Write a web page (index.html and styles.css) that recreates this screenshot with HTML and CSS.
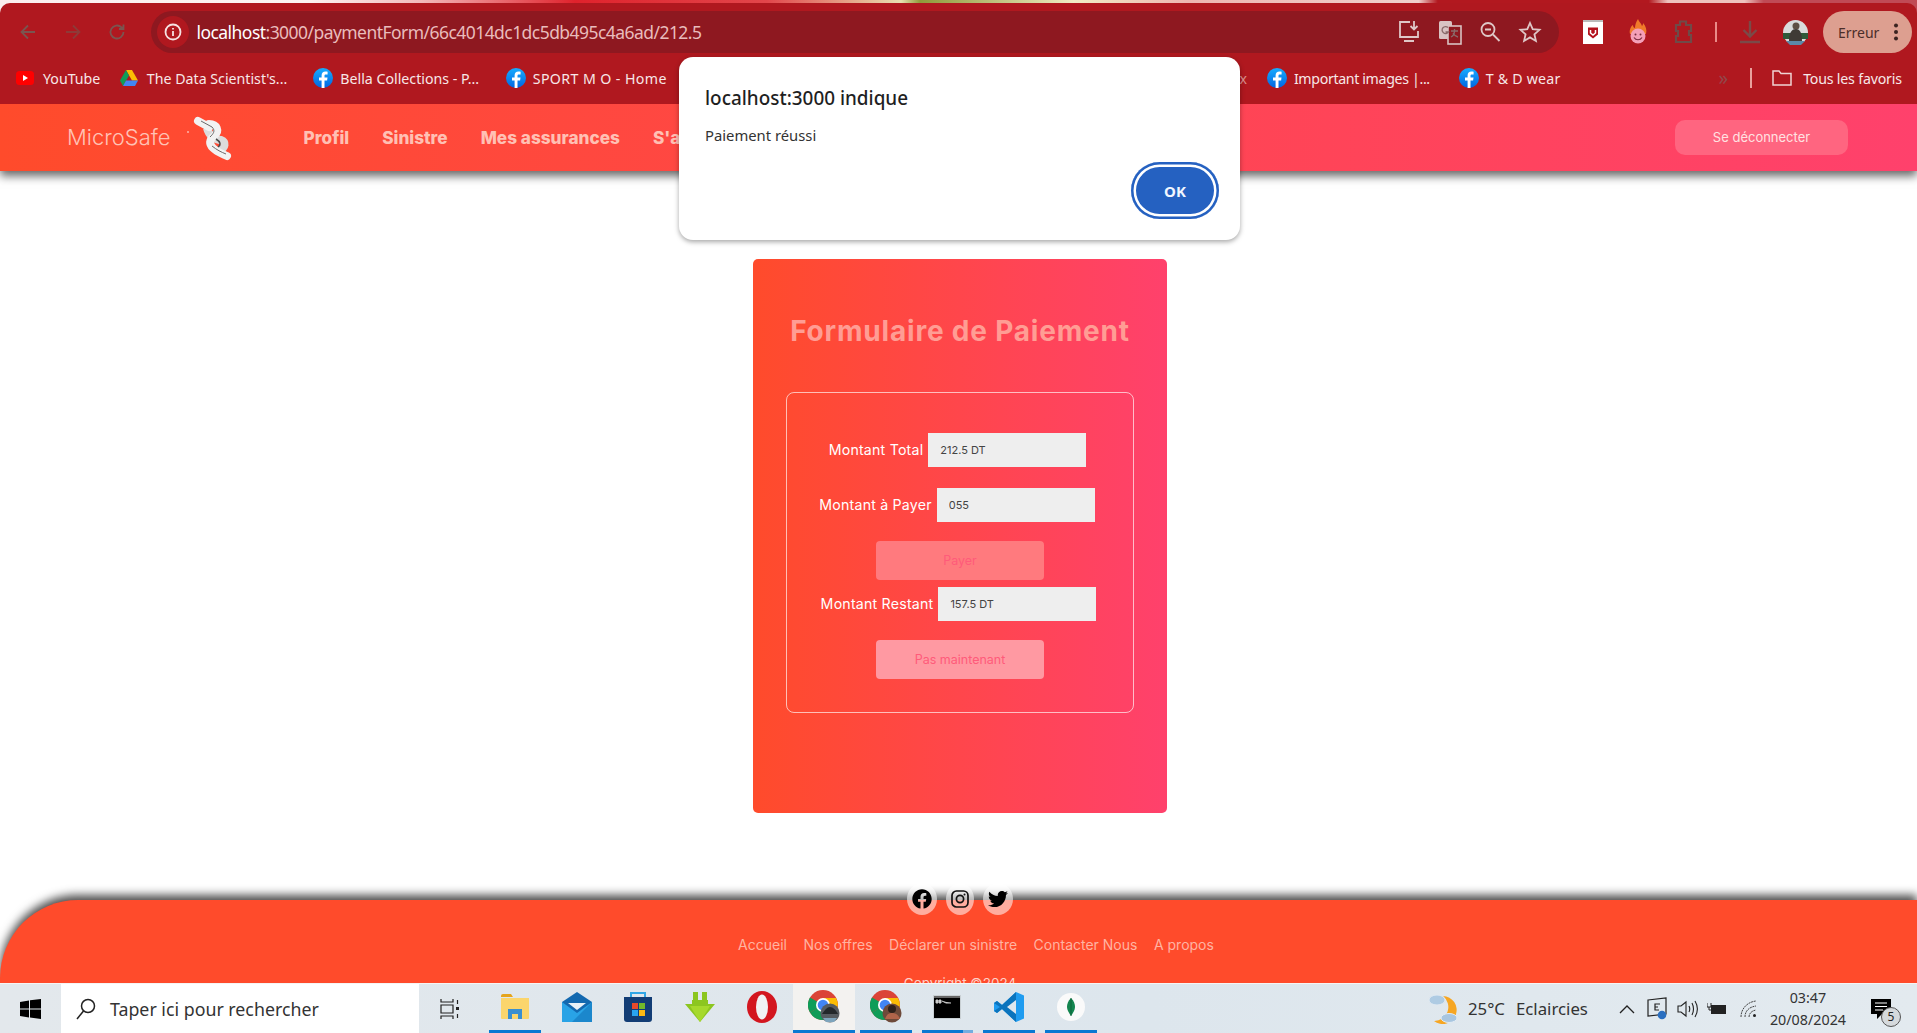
FILE: index.html
```html
<!DOCTYPE html>
<html lang="fr">
<head>
    <meta charset="UTF-8">
    <title>MicroSafe - Paiement</title>
    <link rel="stylesheet" href="styles.css">
</head>
<body>
<div class="screen">

    <!-- browser frame -->
    <header class="chrome">
        <div class="toolbar">
            <div class="nav-btn"><svg width="20" height="20" viewBox="0 0 20 20"><path d="M17 10H4M10 3.500 3.500 10l6.500 6.500" class="ic-dim"/></svg></div>
            <div class="nav-btn"><svg width="20" height="20" viewBox="0 0 20 20"><path d="M3 10h13M10 3.500l6.500 6.500-6.500 6.500" class="ic-dimmer"/></svg></div>
            <div class="nav-btn"><svg width="20" height="20" viewBox="0 0 20 20"><path d="M16.500 10a6.500 6.500 0 1 1-2-4.700L16.500 7M16.500 2.500V7H12" class="ic-dim"/></svg></div>
            <div class="address-bar">
                <span class="site-info"><svg width="20" height="20" viewBox="0 0 20 20"><circle cx="10" cy="10" r="7.500" class="ic-light"/><path d="M10 9v5M10 6v1.600" class="ic-light"/></svg></span>
                <span class="url"><b>localhost</b>:3000/paymentForm/66c4014dc1dc5db495c4a6ad/212.5</span>
                <span class="bar-icon"><svg width="28" height="26" viewBox="0 0 28 26"><path d="M14 3H4v15h18v-6M8 22h10M18 2v8M14.500 7l3.500 3.500L21.500 7" class="ic-pale"/></svg></span>
                <span class="bar-icon"><svg width="26" height="28" viewBox="0 0 26 28"><rect x="2" y="3" width="13" height="18" rx="1.500" fill="#d9c2c2"/><rect x="11" y="8" width="13" height="18" fill="#8e1820" stroke="#d9c2c2" stroke-width="1.600"/><path d="M11 9.500a3.500 3.500 0 1 0 .5 4.500h-3M14 13h7M17.500 11v2c0 3-1.500 5-3.500 6M16 15c1 2 3 3.500 5 4" fill="none" stroke="#8a6a6a" stroke-width="1.300"/></svg></span>
                <span class="bar-icon"><svg width="24" height="24" viewBox="0 0 24 24"><circle cx="10" cy="9.500" r="6.500" class="ic-pale"/><path d="M15 14.500 21.500 21M7 9.500h6" class="ic-pale"/></svg></span>
                <span class="bar-icon"><svg width="24" height="24" viewBox="0 0 24 24"><path d="m12 3 2.700 6.200 6.800.6-5.100 4.500 1.500 6.600L12 17.400l-5.900 3.500 1.500-6.600L2.500 9.800l6.800-.6z" class="ic-pale"/></svg></span>
            </div>
            <div class="ext"><svg width="20" height="24" viewBox="0 0 20 24"><rect width="20" height="24" fill="#fff"/><rect width="20" height="2" fill="#bbb"/><path d="M5 7.500h10v7l-5 4-5-4z" fill="#b3121d"/><path d="M7.500 10v3l2.500 2 2.500-2v-3" fill="none" stroke="#fff" stroke-width="1.500"/></svg></div>
            <div class="ext"><svg width="18" height="26" viewBox="0 0 18 26"><path d="M9 0c1 3 3 4 4 7 1-1 1-2 1-3 3 3 4 7 3 11H1C0 11 2 7 4 6c0 2 1 3 2 3 0-3 1-6 3-9z" fill="#f07a2a"/><circle cx="9" cy="17" r="7.500" fill="#f4a0b8"/><circle cx="6.500" cy="15.500" r="1" fill="#7a2c40"/><circle cx="11.500" cy="15.500" r="1" fill="#7a2c40"/><path d="M5 18.500c2 3 6 3 8 0" fill="none" stroke="#7a2c40" stroke-width="1.200"/></svg></div>
            <div class="ext"><svg width="22" height="26" viewBox="0 0 22 26"><path d="M4 6h4V2.500h6V6h5v6h-2v4h2v7H4v-6h2v-5H4z" fill="none" stroke="#6f4a48" stroke-width="2.200"/></svg></div>
            <span class="tool-sep"></span>
            <div class="download"><svg width="24" height="26" viewBox="0 0 24 26"><path d="M12 2v15M5.500 11l6.500 6.500 6.500-6.500M2 23h20" fill="none" stroke="#7a4a48" stroke-width="2.400"/></svg></div>
            <div class="avatar"><svg width="25" height="25" viewBox="0 0 25 25"><circle cx="12.500" cy="12.500" r="12.500" fill="#d9dcdc"/><path d="M0 13h25v6H0z" fill="#2f5a3a"/><path d="M3 21h19l-4 4H7z" fill="#5b89a8"/><circle cx="13" cy="6" r="3.500" fill="#5d5044"/><path d="M6 21c0-9 3-12 7-12s6 4 6 12z" fill="#3f3a36"/></svg></div>
            <div class="error-pill"><span>Erreur</span><i class="dots"></i></div>
        </div>

        <nav class="bookmarks">
            <a class="bm bm-yt"><svg width="18" height="14" viewBox="0 0 18 14"><rect width="18" height="14" rx="3.500" fill="#f00"/><path d="m7 4 5 3-5 3z" fill="#fff"/></svg>YouTube</a>
            <a class="bm bm-drive"><svg width="18" height="17" viewBox="0 0 18 17"><path d="M6 0h6l6 10.500h-6z" fill="#fbbc04"/><path d="M6 0 0 10.500 3 16l6-10.500z" fill="#0f9d58"/><path d="M3 16h12l3-5.500H6z" fill="#4285f4"/></svg>The Data Scientist's...</a>
            <a class="bm bm-fb1"><svg class="fb" viewBox="0 0 20 20"><use href="#fb-badge"/></svg>Bella Collections - P...</a>
            <a class="bm bm-fb2"><svg class="fb" viewBox="0 0 20 20"><use href="#fb-badge"/></svg>SPORT M O - Home</a>
            <a class="bm bm-hidden">x</a>
            <a class="bm bm-fb3"><svg class="fb" viewBox="0 0 20 20"><use href="#fb-badge"/></svg>Important images |...</a>
            <a class="bm bm-fb4"><svg class="fb" viewBox="0 0 20 20"><use href="#fb-badge"/></svg>T &amp; D wear</a>
            <span class="bm-more">&raquo;</span>
            <span class="bm-sep"></span>
            <a class="bm bm-all"><svg width="20" height="18" viewBox="0 0 20 18"><path d="M1 2h6l2 2.500h10V16H1z" fill="none" stroke="#efd3d3" stroke-width="1.500"/></svg>Tous les favoris</a>
        </nav>
    </header>

    <!-- the page itself -->
    <main class="page">
        <div class="site-nav">
            <span class="brand">MicroSafe</span>
            <svg class="knot" width="60" height="55" viewBox="0 0 60 55">
                <circle cx="7" cy="22" r=".8" fill="#fff"/>
                <path d="M26 18C28 26 34 30 40 30 45 32 45 38 38 40" fill="none" stroke="#dcdcdc" stroke-width="8"/>
                <path d="M17 11 28 17M28 14C36 14 39 21 33 26 28 30 28 34 32 38 36 42 42 44 46 46" fill="none" stroke="#f2f2f2" stroke-width="8" stroke-linecap="round"/>
                <path d="M20 11 31 17C35 21 32 24 29 27M31 36C36 40 40 42 45 44" fill="none" stroke="#6a6a6a" stroke-width="1"/>
                <path d="M35 29C40 32 40 35 37 37" fill="none" stroke="#4a4a4a" stroke-width="1.500"/>
            </svg>
            <ul class="site-links">
                <li>Profil</li>
                <li>Sinistre</li>
                <li>Mes assurances</li>
                <li>S'as</li>
            </ul>
            <button class="logout">Se déconnecter</button>
        </div>

        <section class="form-wrap">
            <div class="pay-card">
                <h1>Formulaire de Paiement</h1>
                <form class="pay-form">
                    <div class="row row-first">
                        <label>Montant Total</label>
                        <input type="text" value="212.5 DT" readonly>
                    </div>
                    <div class="row row-second">
                        <label>Montant à Payer</label>
                        <input type="text" value="055" readonly>
                    </div>
                    <button type="button" class="btn btn-pay">Payer</button>
                    <div class="row row-third">
                        <label>Montant Restant</label>
                        <input type="text" value="157.5 DT" readonly>
                    </div>
                    <button type="button" class="btn btn-later">Pas maintenant</button>
                </form>
            </div>
        </section>

        <footer class="site-footer">
            <div class="socials">
                <span class="social"><svg width="20" height="20" viewBox="0 0 512 512"><path d="M504 256C504 119 393 8 256 8S8 119 8 256c0 123.780 90.690 226.380 209.250 245V327.690h-63V256h63v-54.640c0-62.150 37-96.480 93.670-96.480 27.140 0 55.520 4.840 55.520 4.840v61h-31.280c-30.800 0-40.410 19.120-40.410 38.730V256h68.780l-11 71.690h-57.780V501C413.310 482.380 504 379.780 504 256z"/></svg></span>
                <span class="social social-ig"><svg width="18" height="18" viewBox="0 0 18 18"><rect x="1" y="1" width="16" height="16" rx="4.500" fill="none" stroke="#111" stroke-width="1.700"/><circle cx="9" cy="9" r="3.600" fill="none" stroke="#111" stroke-width="1.700"/><circle cx="13.500" cy="4.500" r="1" fill="#111"/></svg></span>
                <span class="social"><svg width="20" height="20" viewBox="0 0 512 512"><path d="M459.370 151.716c.325 4.548.325 9.097.325 13.645 0 138.720-105.583 298.558-298.558 298.558-59.452 0-114.680-17.219-161.137-47.106 8.447.974 16.568 1.299 25.340 1.299 49.055 0 94.213-16.568 130.274-44.832-46.132-.975-84.792-31.188-98.112-72.772 6.498.974 12.995 1.624 19.818 1.624 9.421 0 18.843-1.300 27.614-3.573-48.081-9.747-84.143-51.980-84.143-102.985v-1.299c13.969 7.797 30.214 12.670 47.431 13.319-28.264-18.843-46.781-51.005-46.781-87.391 0-19.492 5.197-37.360 14.294-52.954 51.655 63.675 129.300 105.258 216.365 109.807-1.624-7.797-2.599-15.918-2.599-24.040 0-57.828 46.782-104.934 104.934-104.934 30.213 0 57.502 12.670 76.670 33.137 23.715-4.548 46.456-13.320 66.599-25.340-7.798 24.366-24.366 44.833-46.132 57.827 21.117-2.273 41.584-8.122 60.426-16.243-14.292 20.791-32.161 39.308-52.628 54.253z"/></svg></span>
            </div>
            <ul class="footer-links">
                <li>Accueil</li>
                <li>Nos offres</li>
                <li>Déclarer un sinistre</li>
                <li>Contacter Nous</li>
                <li>A propos</li>
            </ul>
            <p class="copyright">Copyright ©2024</p>
        </footer>
    </main>

    <!-- windows taskbar -->
    <div class="taskbar">
        <div class="start"><svg width="21" height="20" viewBox="0 0 21 20"><path d="M0 3l9-1.500V9.400H0zM10 1.300 21 0v9.400H10zM0 10.500h9v8L0 17zM10 10.500h11V20l-11-1.600z" fill="#000"/></svg></div>
        <div class="search">
            <svg width="22" height="24" viewBox="0 0 22 24"><circle cx="13" cy="9" r="6.500" fill="none" stroke="#222" stroke-width="1.500"/><path d="M8.500 14 2 22" stroke="#222" stroke-width="1.500"/></svg>
            <span>Taper ici pour rechercher</span>
        </div>
        <div class="task-view"><svg width="20" height="22" viewBox="0 0 20 22"><path d="M1 1v3h12V1M1 21v-3h12v3M1 7h12v8H1zM17.500 2v4M17.500 16v4" fill="none" stroke="#222" stroke-width="1.200"/><rect x="16" y="9" width="3" height="3" fill="#222"/></svg></div>

        <div class="app running"><svg width="28" height="26" viewBox="0 0 28 26"><path d="M0 2a2 2 0 0 1 2-2h8l2 3H0z" fill="#e5a41c"/><path d="M0 4h28v20a1 1 0 0 1-1 1H1a1 1 0 0 1-1-1z" fill="#fbd56c"/><path d="M7 25V15h14v10h-4v-5h-6v5z" fill="#3a8fd0"/></svg></div>
        <div class="app"><svg width="30" height="30" viewBox="0 0 30 30"><path d="M15 0 30 10v20H0V10z" fill="#1369b0"/><path d="M6 11h18l-9 7z" fill="#e8f1f8"/><path d="M0 10l15 11 15-11v20H0z" fill="#29a3e6"/><path d="M30 10v20H10z" fill="#1b87cc"/></svg></div>
        <div class="app"><svg width="30" height="32" viewBox="0 0 30 32"><path d="M8 6V2h14v4" fill="none" stroke="#30a6e6" stroke-width="2"/><path d="M1 6h28v22a3 3 0 0 1-3 3H4a3 3 0 0 1-3-3z" fill="#123d75"/><rect x="9" y="12" width="6" height="6" fill="#e74a2b"/><rect x="16" y="12" width="6" height="6" fill="#72b92a"/><rect x="9" y="19" width="6" height="6" fill="#2aa4ef"/><rect x="16" y="19" width="6" height="6" fill="#fbb813"/></svg></div>
        <div class="app"><svg width="30" height="30" viewBox="0 0 30 30"><path d="M8 0h5v8h4V0h5v8h1v4h7L15 30 0 12h7V8h1z" fill="#8cc620"/><path d="M15 30 5 14h20z" fill="#a6d92c"/></svg></div>
        <div class="app"><svg width="30" height="32" viewBox="0 0 30 32"><ellipse cx="15" cy="16" rx="15" ry="16" fill="#d3161f"/><ellipse cx="15" cy="16" rx="6" ry="12.500" fill="#f0f2f4"/></svg></div>
        <div class="app running active"><svg width="32" height="34" viewBox="0 0 32 34"><use href="#chrome-ball"/><circle cx="22" cy="23" r="9.500" fill="#555b60"/><path d="M14 24c3-4 5-7 8-7s6 3 8 7z" fill="#23282b"/><path d="M15 28h14l-3 4h-8z" fill="#7ea5bd"/></svg></div>
        <div class="app running"><svg width="32" height="34" viewBox="0 0 32 34"><use href="#chrome-ball"/><circle cx="22" cy="23" r="9.500" fill="#6e4a3a"/><circle cx="22" cy="19" r="4" fill="#2e211b"/><path d="M15 29c2-5 4-6 7-6s6 1 8 6z" fill="#b0644a"/></svg></div>
        <div class="app running part"><svg width="28" height="24" viewBox="0 0 28 24"><rect width="28" height="24" fill="#c9d0d4"/><rect x="1" y="1" width="26" height="22" fill="#000"/><rect x="1" y="1" width="26" height="2" fill="#666"/><path d="M3 5h2v3H3zM6 5h2v3H6zM9 6l4 2h5" stroke="#ccc" stroke-width="1" fill="#ccc"/></svg></div>
        <div class="app running"><svg width="30" height="30" viewBox="0 0 30 30"><path d="M22 0 30 3.500v23L22 30 8 17l-5 4-3-2v-8l3-2 5 4z" fill="#1f9cf0"/><path d="M22 0v30L8 17l-5 4-3-2 6-4-6-4 3-2 5 4z" fill="#0b74bd"/><path d="M22 8v14l-9-7z" fill="#dfe7ee"/></svg></div>
        <div class="app running"><svg width="28" height="28" viewBox="0 0 28 28"><circle cx="14" cy="14" r="14" fill="#fafafa"/><path d="M14 5c3 3 4 6 4 9s-2 6-4 9c-2-3-4-6-4-9s1-6 4-9z" fill="#13854f"/><path d="M14 5v18" stroke="#0b5a34" stroke-width=".8"/></svg></div>

        <div class="tray">
            <svg class="weather" width="30" height="32" viewBox="0 0 30 32"><path d="M15 3a14 14 0 1 1-9 25 14 14 0 0 0 9-25z" fill="#f6a623"/><ellipse cx="9" cy="7" rx="8" ry="5" fill="#aecbe3" stroke="#dfe9f2"/><ellipse cx="21" cy="25" rx="8" ry="4.500" fill="#a8c6e0" stroke="#e3edf5"/></svg>
            <span class="temp">25°C</span>
            <span class="sky">Eclaircies</span>
            <svg class="caret" width="16" height="10" viewBox="0 0 16 10"><path d="M1 9l7-7 7 7" fill="none" stroke="#222" stroke-width="1.300"/></svg>
            <svg class="tray-icon tray-sync" width="20" height="24" viewBox="0 0 20 24"><path d="M1 3 19 1v16L1 19z" fill="none" stroke="#222" stroke-width="1.200"/><path d="M13 7H8v6h4M8 10h3" fill="none" stroke="#222" stroke-width="1.200"/><circle cx="15" cy="18" r="4.300" fill="#2a6fc0"/></svg>
            <svg class="tray-icon tray-sound" width="21" height="20" viewBox="0 0 21 20"><path d="M1 7h3l5-4v14l-5-4H1zM12 7c1 2 1 4 0 6M15 4c2 4 2 8 0 12M18 2c3 5 3 11 0 16" fill="none" stroke="#222" stroke-width="1.100"/></svg>
            <svg class="tray-icon tray-power" width="20" height="14" viewBox="0 0 20 14"><rect x="4" y="3" width="15" height="9" fill="#222"/><path d="M0 1v4h4V1M2 5v3h2" fill="none" stroke="#222" stroke-width="1"/></svg>
            <svg class="tray-icon tray-wifi" width="17" height="18" viewBox="0 0 17 18"><path d="M1 17C1 9 7 2 16 1M5 17c0-6 4-10 11-11M9 17c0-3 2-6 7-7" fill="none" stroke="#333" stroke-width=".9" stroke-dasharray="2 .7"/><circle cx="14.500" cy="15.500" r="1.500" fill="#222"/></svg>
            <div class="clock"><span>03:47</span><span>20/08/2024</span></div>
            <div class="notif">
                <svg width="20" height="20" viewBox="0 0 20 20"><path d="M0 0h20v15h-9l-5 5v-5H0z" fill="#000"/><path d="M4 4h12M4 7.500h12M4 11h8" stroke="#fff" stroke-width="1"/></svg>
                <span class="badge">5</span>
            </div>
        </div>
    </div>

    <!-- alert box -->
    <div class="alert">
        <h2>localhost:3000 indique</h2>
        <p>Paiement réussi</p>
        <div class="alert-actions"><button class="ok">OK</button></div>
    </div>

    <svg class="defs" width="0" height="0">
        <defs>
            <linearGradient id="fb-grad" x1="0" y1="0" x2="0" y2="1"><stop offset="0" stop-color="#18acfe"/><stop offset="1" stop-color="#0165e1"/></linearGradient>
            <g id="fb-badge"><circle cx="10" cy="10" r="10" fill="url(#fb-grad)"/><path d="M11.500 20v-7.500h2.600l.4-3h-3V7.800c0-.9.300-1.400 1.500-1.400h1.600V3.700c-.4 0-1.200-.1-2.200-.1-2.300 0-3.800 1.300-3.800 3.800v2.100H6v3h2.600V20z" fill="#fff"/></g>
            <g id="chrome-ball"><circle cx="15" cy="15" r="15" fill="#db4437"/><path d="M15 15 2 22.500A15 15 0 0 1 2 7.500z" fill="#0f9d58"/><path d="M2 22.500A15 15 0 0 0 15 30l13-15H15z" fill="#0f9d58"/><path d="M15 8h13a15 15 0 0 1 0 14L15 15z" fill="#fbbc04"/><circle cx="15" cy="15" r="7" fill="#fff"/><circle cx="15" cy="15" r="5.300" fill="#4285f4"/></g>
        </defs>
    </svg>
</div>
</body>
</html>
```

FILE: styles.css
```css
* {
    box-sizing: border-box;
}

html, body {
    margin: 0;
    height: 100%;
    overflow: hidden;
}

body {
    background-color: #fff;
    font-family: "Noto Sans", "Open Sans", sans-serif;
}

ul {
    list-style: none;
    margin: 0;
    padding: 0;
}

.screen {
    position: relative;
    display: flex;
    flex-direction: column;
    height: 100vh;
    overflow: hidden;
}

.defs {
    position: absolute;
}

/* ---- browser frame ---- */
.chrome {
    flex: none;
    padding-top: 3px;
    background: linear-gradient(to right, #fbeeee 0, #fdf4f2 16%, #f3b9ba 22%, #e0222c 30%, #e2464b 40%, #e8e0b0 47%, #8f9a3a 48%, #f1ecc4 56%, #efb5b0 62%, #f0d0cc 74%, #b2181f 75%, #b2181f 86%, #eec3be 87%, #eec3be 91%, #c04a55 92%, #c04a55 100%);
}

.toolbar {
    display: flex;
    align-items: flex-start;
    height: 50px;
    padding: 8px 5px 0 6px;
    background-color: #b0181f;
    border-radius: 10px 10px 0 0;
}

.nav-btn {
    flex: none;
    display: flex;
    align-items: center;
    justify-content: center;
    width: 44.500px;
    height: 42px;
}

.ic-dim, .ic-dimmer, .ic-light, .ic-pale {
    fill: none;
    stroke-width: 1.800;
}

.ic-dim { stroke: #7a5550; }
.ic-dimmer { stroke: #8e3a38; }
.ic-light { stroke: #f6e2e2; }
.ic-pale { stroke: #dfc7c7; }

.address-bar {
    flex: 1;
    display: flex;
    align-items: center;
    height: 42px;
    margin: 0 11px 0 11px;
    padding: 0 9px 0 6px;
    background-color: #8e1820;
    border-radius: 21px;
}

.site-info {
    display: flex;
    align-items: center;
    justify-content: center;
    width: 32px;
    height: 32px;
    background-color: #b0181f;
    border-radius: 50%;
}

.url {
    flex: 1;
    margin-left: 8px;
    font-size: 17.500px;
    letter-spacing: -0.550px;
    color: #e9bcbc;
    white-space: nowrap;
}

.url b {
    font-weight: 400;
    color: #fff;
}

.bar-icon {
    display: flex;
    align-items: center;
    justify-content: center;
    width: 40px;
}

.ext {
    flex: none;
    display: flex;
    align-items: center;
    justify-content: center;
    width: 45px;
    height: 42px;
}

.tool-sep {
    flex: none;
    width: 2px;
    height: 20px;
    margin: 11px 0 0 10px;
    background-color: #e98b88;
}

.download {
    flex: none;
    display: flex;
    align-items: center;
    justify-content: center;
    width: 44px;
    height: 42px;
    margin-left: 11px;
}

.avatar {
    flex: none;
    display: flex;
    align-items: center;
    justify-content: center;
    width: 46px;
    height: 42px;
}

.error-pill {
    flex: none;
    display: flex;
    align-items: center;
    justify-content: space-between;
    width: 89px;
    height: 42px;
    margin-left: 5px;
    padding: 0 14px 0 15px;
    background-color: #dd9f90;
    border-radius: 21px;
    font-size: 14px;
    color: #4b2e2a;
}

.dots {
    width: 4px;
    height: 4px;
    background-color: #3a2320;
    border-radius: 50%;
    box-shadow: 0 -6.500px 0 #3a2320, 0 6.500px 0 #3a2320;
}

.bookmarks {
    display: flex;
    align-items: center;
    height: 51px;
    padding: 0 0 1px 16px;
    background-color: #b0181f;
    font-size: 14.200px;
    color: #f7e7e7;
}

.bm {
    flex: none;
    display: flex;
    align-items: center;
    gap: 7px;
    white-space: nowrap;
}

.fb {
    width: 20px;
    height: 20px;
}

.bm-yt { gap: 9px; }
.bm-drive { margin-left: 19.500px; gap: 9px; }
.bm-fb1 { margin-left: 26px; }
.bm-fb2 { margin-left: 26.500px; letter-spacing: 0.400px; }
.bm-hidden { margin-left: 572.500px; color: #d98d8d; }
.bm-fb3 { margin-left: 20px; letter-spacing: -0.350px; }
.bm-fb4 { margin-left: 29px; letter-spacing: 0.200px; }

.bm-more {
    margin-left: 158px;
    font-size: 19px;
    color: #93464a;
}

.bm-sep {
    width: 2px;
    height: 20px;
    margin-left: 22px;
    background-color: #e9a09c;
}

.bm-all {
    margin-left: 20px;
    gap: 11px;
    letter-spacing: -0.200px;
}

/* ---- the app page ---- */
.page {
    flex: 1;
    min-height: 0;
    overflow: hidden;
}

.site-nav {
    position: relative;
    display: flex;
    align-items: center;
    height: 67px;
    padding: 0 69px 0 67px;
    background: linear-gradient(to right, #ff4b2b, #ff416c);
    box-shadow: 0 5px 9px rgba(0, 0, 0, 0.6);
}

.brand {
    padding-bottom: 2px;
    font-family: Inter, "Open Sans", sans-serif;
    font-size: 22px;
    font-weight: 300;
    color: #ffc2b5;
}

.knot {
    margin-left: 10px;
}

.site-links {
    display: flex;
    gap: 33px;
    margin-left: 63px;
    padding-bottom: 1px;
    font-family: Inter, "Open Sans", sans-serif;
    font-size: 17.200px;
    font-weight: 800;
    color: #ffc0b4;
}

.logout {
    width: 173px;
    height: 35px;
    margin-left: auto;
    padding-bottom: 3px;
    background-color: #ff6580;
    border: none;
    border-radius: 10px;
    font-family: Inter, "Open Sans", sans-serif;
    font-size: 13px;
    color: #ffe2e2;
}

.form-wrap {
    display: flex;
    justify-content: center;
    padding: 88px 0 87px 3px;
}

.pay-card {
    width: 414px;
    height: 554px;
    padding: 55px 33px 0;
    background: linear-gradient(to right, #ff4b2b, #ff416c);
    border-radius: 5px;
}

.pay-card h1 {
    margin: 1px 0 45px;
    height: 32px;
    line-height: 32px;
    text-align: center;
    white-space: nowrap;
    font-family: Inter, "Open Sans", sans-serif;
    font-size: 28px;
    font-weight: 700;
    letter-spacing: 0.800px;
    color: #ff9d94;
}

.pay-form {
    display: flex;
    flex-direction: column;
    align-items: center;
    height: 321px;
    padding-top: 40px;
    border: 1px solid rgba(255, 255, 255, 0.65);
    border-radius: 8px;
}

.row {
    display: flex;
    align-items: center;
    justify-content: center;
    gap: 5px;
    padding-right: 3px;
}

.row-first {
    padding-right: 5px;
}

.row-second {
    margin-top: 21px;
    padding-right: 6px;
}

.row-third {
    margin-top: 7px;
}

.row label {
    padding-bottom: 2px;
    font-family: Inter, "Open Sans", sans-serif;
    font-size: 14.200px;
    letter-spacing: 0.200px;
    color: #fff;
    white-space: nowrap;
}

.row input {
    width: 158px;
    height: 34px;
    padding: 0 12px;
    background-color: #eee;
    border: none;
    border-radius: 0;
    font-family: Inter, "Open Sans", sans-serif;
    font-size: 11px;
    color: #444;
}

.btn {
    width: 168px;
    height: 39px;
    margin-top: 19px;
    border: none;
    border-radius: 4px;
    font-family: Inter, "Open Sans", sans-serif;
    font-size: 12.500px;
    color: #ff5b7a;
}

.btn-pay {
    background-color: #ff7a7e;
}

.btn-later {
    background-color: #ff99a2;
}

.site-footer {
    display: flow-root;
    position: relative;
    height: 120px;
    background-color: #ff4b2b;
    border-radius: 78px 0 0 0;
    box-shadow: 0 -5px 10px rgba(0, 0, 0, 0.7);
    font-family: Inter, "Open Sans", sans-serif;
    text-align: center;
}

.socials {
    display: flex;
    justify-content: center;
    align-items: center;
    gap: 9px;
    margin: -17px 0 0 3px;
}

.social {
    display: flex;
    align-items: center;
    justify-content: center;
    width: 30px;
    height: 32px;
    background-color: rgba(255, 255, 255, 0.55);
    border-radius: 50%;
}

.social-ig {
    width: 28px;
}

.footer-links {
    display: flex;
    justify-content: center;
    gap: 16.500px;
    margin: 21px 0 0 35px;
    font-size: 14px;
    color: #ffb3a2;
}

.copyright {
    margin: 22px 0 0 3px;
    font-size: 13.500px;
    color: #ffd0c8;
}

/* ---- windows taskbar ---- */
.taskbar {
    flex: none;
    display: flex;
    align-items: stretch;
    height: 50px;
    background: linear-gradient(to right, #e3e8ec, #dde6ed 60%, #e3eaef);
    border-top: 1px solid #f5f5f5;
}

.start {
    flex: none;
    display: flex;
    align-items: center;
    justify-content: center;
    width: 61px;
}

.search {
    flex: none;
    display: flex;
    align-items: center;
    gap: 13px;
    width: 358px;
    padding-left: 14px;
    background-color: #fff;
    font-size: 17.800px;
    color: #333;
}

.task-view {
    flex: none;
    display: flex;
    align-items: center;
    justify-content: center;
    width: 62px;
    margin-right: 3px;
}

.app {
    position: relative;
    flex: none;
    display: flex;
    align-items: center;
    justify-content: center;
    width: 61.800px;
    padding-bottom: 4px;
}

.running::after {
    content: "";
    position: absolute;
    left: 5px;
    right: 5px;
    bottom: 0;
    height: 3px;
    background-color: #0a78d2;
}

.active {
    background-color: #f3f2f0;
}

.active::after {
    left: 0;
    right: 0;
}

.part::after {
    background: linear-gradient(to right, #0a78d2 80%, #74addf 80%);
}

.tray {
    flex: 1;
    display: flex;
    align-items: center;
    font-size: 16.800px;
    color: #333;
}

.weather {
    margin-left: 326px;
}

.temp {
    margin-left: 10px;
}

.sky {
    margin-left: 11px;
}

.caret {
    margin-left: 31px;
}

.tray-sync { margin-left: 12px; }
.tray-sound { margin-left: 10px; }
.tray-power { margin-left: 9px; }
.tray-wifi { margin-left: 13px; }

.clock {
    display: flex;
    flex-direction: column;
    align-items: center;
    gap: 2px;
    margin-left: 13px;
    font-size: 14.300px;
    line-height: 20px;
}

.notif {
    position: relative;
    display: flex;
    margin-left: 25px;
}

.badge {
    position: absolute;
    left: 10px;
    top: 8px;
    width: 20px;
    height: 20px;
    line-height: 18px;
    text-align: center;
    background-color: #d5d9dc;
    border: 1px solid #555;
    border-radius: 50%;
    font-size: 12px;
    color: #222;
}

/* ---- alert ---- */
.alert {
    position: absolute;
    left: 679px;
    top: 57px;
    display: flex;
    flex-direction: column;
    width: 561px;
    height: 183px;
    padding: 28px 21px 21px 26px;
    background-color: #fff;
    border-radius: 14px;
    box-shadow: 0 2px 5px rgba(0, 0, 0, 0.35);
}

.alert h2 {
    margin: 0;
    font-size: 18.900px;
    line-height: 26px;
    font-weight: 500;
    color: #1f1f1f;
}

.alert p {
    margin: 14px 0 0;
    font-size: 14.800px;
    line-height: 20px;
    color: #333;
}

.alert-actions {
    display: flex;
    justify-content: flex-end;
    margin-top: auto;
}

.ok {
    width: 88px;
    height: 57px;
    background-color: #2561c1;
    border: none;
    border-radius: 29px;
    box-shadow: inset 0 0 0 2.500px #2561c1, inset 0 0 0 5px #fff;
    font-family: "Noto Sans", sans-serif;
    font-size: 15px;
    font-weight: 700;
    color: #f1f6ff;
}
```
